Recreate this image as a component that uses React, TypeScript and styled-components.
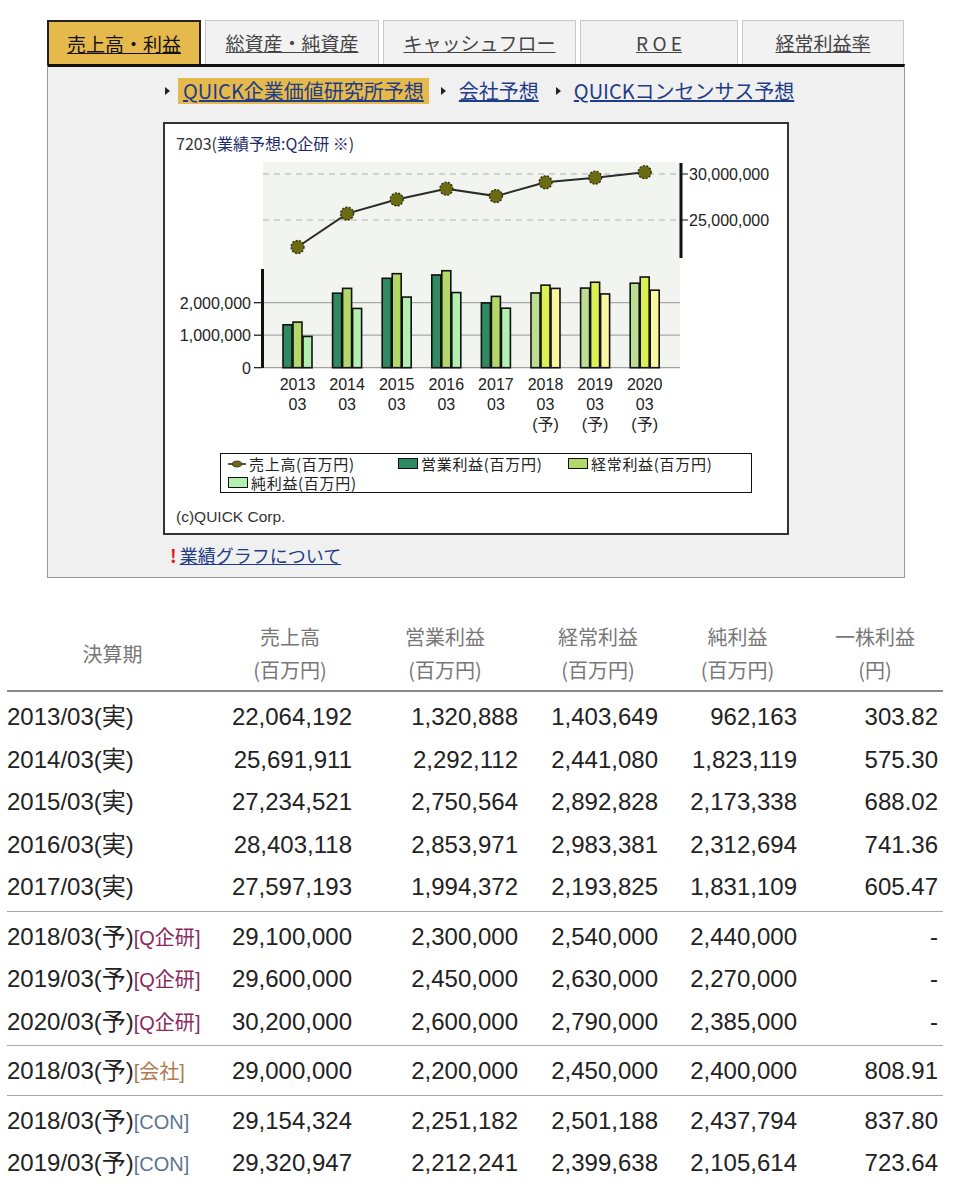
import React from 'react';
import styled, { createGlobalStyle } from 'styled-components';

const GlobalStyle = createGlobalStyle`
  body {
    margin: 0;
    background: #fff;
    color: #222;
    font-family: "Liberation Sans", "Noto Sans CJK JP", sans-serif;
  }
`;

const tabs = [
    { label: '売上高・利益', w: 154, active: true },
    { label: '総資産・純資産', w: 174 },
    { label: 'キャッシュフロー', w: 193 },
    { label: 'R O E', w: 158 },
    { label: '経常利益率', w: 162 },
];

const navs = [
    { label: 'QUICK企業価値研究所予想', active: true },
    { label: '会社予想' },
    { label: 'QUICKコンセンサス予想' },
];

const years = ['2013', '2014', '2015', '2016', '2017', '2018', '2019', '2020'];
const sales = [22064192, 25691911, 27234521, 28403118, 27597193, 29100000, 29600000, 30200000];
const opProfit = [1320888, 2292112, 2750564, 2853971, 1994372, 2300000, 2450000, 2600000];
const ordProfit = [1403649, 2441080, 2892828, 2983381, 2193825, 2540000, 2630000, 2790000];
const netProfit = [962163, 1823119, 2173338, 2312694, 1831109, 2440000, 2270000, 2385000];

const actualColors = ['#2f8a62', '#b3d768', '#b2f0b2'];
const forecastColors = ['#bcdc92', '#dcf052', '#f8f6a0'];

const groups = [
    [
        { period: '2013/03(実)', vals: ['22,064,192', '1,320,888', '1,403,649', '962,163', '303.82'] },
        { period: '2014/03(実)', vals: ['25,691,911', '2,292,112', '2,441,080', '1,823,119', '575.30'] },
        { period: '2015/03(実)', vals: ['27,234,521', '2,750,564', '2,892,828', '2,173,338', '688.02'] },
        { period: '2016/03(実)', vals: ['28,403,118', '2,853,971', '2,983,381', '2,312,694', '741.36'] },
        { period: '2017/03(実)', vals: ['27,597,193', '1,994,372', '2,193,825', '1,831,109', '605.47'] },
    ],
    [
        { period: '2018/03(予)', tag: 'Q企研', vals: ['29,100,000', '2,300,000', '2,540,000', '2,440,000', '-'] },
        { period: '2019/03(予)', tag: 'Q企研', vals: ['29,600,000', '2,450,000', '2,630,000', '2,270,000', '-'] },
        { period: '2020/03(予)', tag: 'Q企研', vals: ['30,200,000', '2,600,000', '2,790,000', '2,385,000', '-'] },
    ],
    [
        { period: '2018/03(予)', tag: '会社', vals: ['29,000,000', '2,200,000', '2,450,000', '2,400,000', '808.91'] },
    ],
    [
        { period: '2018/03(予)', tag: 'CON', vals: ['29,154,324', '2,251,182', '2,501,188', '2,437,794', '837.80'] },
        { period: '2019/03(予)', tag: 'CON', vals: ['29,320,947', '2,212,241', '2,399,638', '2,105,614', '723.64'] },
    ],
];

const tagColors: Record<string, string> = {
    'Q企研': '#8b2a5c',
    '会社': '#b07a50',
    'CON': '#5c7590',
};

const Page = styled.div`
    width: 960px;
    padding: 20px 0 30px;
`;

const TabBar = styled.div`
    display: flex;
    gap: 4px;
    margin-left: 47px;
    width: 858px;
`;

const Tab = styled.div<{ $w: number; $active?: boolean }>`
    width: ${p => p.$w}px;
    height: 44px;
    box-sizing: border-box;
    display: flex;
    align-items: center;
    justify-content: center;
    background: ${p => (p.$active ? '#e6b94c' : '#f2f2f2')};
    border: ${p => (p.$active ? '2px solid #222' : '1px solid #c8c8c8')};
    border-bottom: none;
    font-family: "Noto Sans CJK JP", sans-serif;
    font-size: 19px;
    color: ${p => (p.$active ? '#111' : '#444')};
    text-decoration: underline;
`;

const Panel = styled.div`
    margin-left: 47px;
    width: 858px;
    height: 514px;
    box-sizing: border-box;
    border: 1px solid #9a9a9a;
    border-top: 3px solid #111;
    background: #f0f0f0;
`;

const SubNav = styled.div`
    display: flex;
    gap: 12px;
    padding-left: 117px;
    margin-top: 11px;
`;

const NavItem = styled.div`
    display: flex;
    align-items: center;
    &::before {
        content: '';
        border-left: 5px solid #222;
        border-top: 4px solid transparent;
        border-bottom: 4px solid transparent;
        margin-right: 8px;
    }
`;

const NavLink = styled.span<{ $active?: boolean }>`
    height: 26px;
    line-height: 26px;
    padding: 0 5px;
    background: ${p => (p.$active ? '#e6b94c' : 'transparent')};
    font-family: "Noto Sans CJK JP", sans-serif;
    font-size: 20px;
    color: #1f3c88;
    text-decoration: underline;
`;

const ChartBox = styled.div`
    margin: 18px 0 0 115px;
    width: 626px;
    height: 413px;
    box-sizing: border-box;
    border: 2px solid #333;
    background: #fff;
`;

const ChartTitle = styled.div`
    height: 31px;
    box-sizing: border-box;
    padding: 10px 0 0 11px;
    line-height: 18px;
    font-family: "Noto Sans CJK JP", sans-serif;
    font-size: 16px;
    color: #333;
    span {
        color: #1c2a6a;
    }
`;

const Plot = styled.svg`
    display: block;
    width: 622px;
    height: 290px;
`;

const Legend = styled.div`
    margin: 8px 0 0 55px;
    width: 532px;
    height: 40px;
    box-sizing: border-box;
    border: 1px solid #111;
    padding: 0 0 0 7px;
    display: flex;
    flex-wrap: wrap;
    align-content: flex-start;
`;

const LegendItem = styled.div<{ $w: number }>`
    width: ${p => p.$w}px;
    height: 19px;
    line-height: 19px;
    display: flex;
    align-items: center;
    gap: 3px;
    font-family: "Noto Sans CJK JP", sans-serif;
    font-size: 15px;
    letter-spacing: 0.7px;
    color: #222;
`;

const Swatch = styled.span<{ $c: string }>`
    width: 18px;
    height: 9px;
    border: 1px solid #111;
    background: ${p => p.$c};
    flex: none;
`;

const Copyright = styled.div`
    margin: 15px 0 0 11px;
    line-height: 18px;
    font-size: 15.5px;
    color: #333;
`;

const InfoRow = styled.div`
    margin: 9px 0 0 122px;
    line-height: 22px;
    font-family: "Noto Sans CJK JP", sans-serif;
    font-size: 18px;
    b {
        color: #d42020;
        margin-right: 3px;
    }
    a {
        color: #1f3c88;
        text-decoration: underline;
    }
`;

const Table = styled.div`
    margin: 42px 0 0 7px;
    width: 936px;
`;

const cols = '211px 144px 166px 140px 139px 136px';

const HeadRow = styled.div`
    display: grid;
    grid-template-columns: ${cols};
    padding-bottom: 4px;
    border-bottom: 2px solid #8a8a8a;
`;

const HeadCell = styled.div`
    display: flex;
    flex-direction: column;
    justify-content: center;
    align-items: center;
    line-height: 33px;
    font-family: "Noto Sans CJK JP", sans-serif;
    font-size: 20px;
    color: #777;
`;

const Group = styled.div<{ $last?: boolean }>`
    padding: 4px 0 2px;
    border-bottom: ${p => (p.$last ? 'none' : '1px solid #a8a8a8')};
`;

const Row = styled.div`
    display: grid;
    grid-template-columns: ${cols};
    height: 42.5px;
    align-items: center;
    font-size: 24px;
    color: #222;
    & > span {
        line-height: 28px;
        height: 28px;
        text-align: right;
        padding-right: 10px;
    }
    & > span:first-child {
        text-align: left;
        padding-right: 0;
        white-space: nowrap;
    }
    & > span:last-child {
        padding-right: 5px;
    }
`;

const Tag = styled.em<{ $c: string }>`
    font-style: normal;
    font-size: 20px;
    color: ${p => p.$c};
`;

const cx = (i: number) => 297.5 + 49.6 * i;
const barY = (v: number) => 367.7 - (v / 1e6) * 32.5;
const lineY = (v: number) => 174 - (v / 1e6 - 30) * 9.2;

function Chart() {
    const series = [opProfit, ordProfit, netProfit];
    const points = sales.map((v, i) => `${cx(i)},${lineY(v)}`).join(' ');
    return (
        <Plot viewBox="0 0 622 290">
            <g transform="translate(-165 -155)" fontFamily='"Liberation Sans", "Noto Sans CJK JP", sans-serif' fontSize="16" fill="#222">
                <rect x={263} y={162} width={417} height={206} fill="#f1f4ef" />
                {[174, 220].map(y => (
                    <line key={y} x1={263} x2={680} y1={y} y2={y} stroke="#b0b0b0" strokeWidth={1} strokeDasharray="6 5" />
                ))}
                <line x1={681} x2={681} y1={163} y2={258} stroke="#111" strokeWidth={3} />
                {[['30,000,000', 174], ['25,000,000', 220]].map(([t, y]) => (
                    <g key={t}>
                        <line x1={681} x2={688} y1={y} y2={y} stroke="#111" strokeWidth={1} />
                        <text x={689} y={Number(y) + 6}>{t}</text>
                    </g>
                ))}
                {[302.7, 335.2].map(y => (
                    <line key={y} x1={263} x2={680} y1={y} y2={y} stroke="#a8a8a8" strokeWidth={1.3} />
                ))}
                <line x1={263} x2={680} y1={367.7} y2={367.7} stroke="#a0a0a0" strokeWidth={1.3} />
                <line x1={262.5} x2={262.5} y1={269} y2={368} stroke="#111" strokeWidth={3} />
                {[['2,000,000', 302.7], ['1,000,000', 335.2], ['0', 367.7]].map(([t, y]) => (
                    <g key={t}>
                        <line x1={254} x2={262} y1={y} y2={y} stroke="#111" strokeWidth={1.2} />
                        <text x={251} y={Number(y) + 6} textAnchor="end">{t}</text>
                    </g>
                ))}
                {years.map((yr, i) => (
                    <g key={yr}>
                        {series.map((s, k) => {
                            const top = barY(s[i]);
                            const colors = i >= 5 ? forecastColors : actualColors;
                            return (
                                <rect
                                    key={k}
                                    x={cx(i) - 14.5 + k * 10}
                                    y={top}
                                    width={9}
                                    height={367.7 - top}
                                    fill={colors[k]}
                                    stroke="#111"
                                    strokeWidth={1.6}
                                />
                            );
                        })}
                        <text x={cx(i)} y={390} textAnchor="middle">{yr}</text>
                        <text x={cx(i)} y={410} textAnchor="middle">03</text>
                        {i >= 5 && <text x={cx(i)} y={430} textAnchor="middle">(予)</text>}
                    </g>
                ))}
                <polyline points={points} fill="none" stroke="#2a2a2a" strokeWidth={2} />
                {sales.map((v, i) => (
                    <circle key={i} cx={cx(i)} cy={lineY(v)} r={6.5} fill="#6b6b14" stroke="#2a2a10" strokeWidth={1.3} strokeDasharray="2 1.5" />
                ))}
            </g>
        </Plot>
    );
}

function App() {
    return (
        <Page>
            <GlobalStyle />
            <TabBar>
                {tabs.map(t => (
                    <Tab key={t.label} $w={t.w} $active={t.active}>{t.label}</Tab>
                ))}
            </TabBar>
            <Panel>
                <SubNav>
                    {navs.map(n => (
                        <NavItem key={n.label}>
                            <NavLink $active={n.active}>{n.label}</NavLink>
                        </NavItem>
                    ))}
                </SubNav>
                <ChartBox>
                    <ChartTitle>7203(<span>業績予想:Q企研 ※</span>)</ChartTitle>
                    <Chart />
                    <Legend>
                        <LegendItem $w={170}>
                            <svg width="18" height="10" viewBox="0 0 18 10">
                                <line x1="0" x2="18" y1="5" y2="5" stroke="#222" strokeWidth="1.5" />
                                <ellipse cx="9" cy="5" rx="5" ry="3" fill="#6b6b14" stroke="#222" strokeWidth="0.8" />
                            </svg>
                            売上高(百万円)
                        </LegendItem>
                        <LegendItem $w={170}>
                            <Swatch $c={actualColors[0]} />営業利益(百万円)
                        </LegendItem>
                        <LegendItem $w={180}>
                            <Swatch $c={actualColors[1]} />経常利益(百万円)
                        </LegendItem>
                        <LegendItem $w={170}>
                            <Swatch $c={actualColors[2]} />純利益(百万円)
                        </LegendItem>
                    </Legend>
                    <Copyright>(c)QUICK Corp.</Copyright>
                </ChartBox>
                <InfoRow>
                    <b>!</b>
                    <a>業績グラフについて</a>
                </InfoRow>
            </Panel>
            <Table>
                <HeadRow>
                    <HeadCell>決算期</HeadCell>
                    <HeadCell><span>売上高</span><span>(百万円)</span></HeadCell>
                    <HeadCell><span>営業利益</span><span>(百万円)</span></HeadCell>
                    <HeadCell><span>経常利益</span><span>(百万円)</span></HeadCell>
                    <HeadCell><span>純利益</span><span>(百万円)</span></HeadCell>
                    <HeadCell><span>一株利益</span><span>(円)</span></HeadCell>
                </HeadRow>
                {groups.map((g, gi) => (
                    <Group key={gi} $last={gi === groups.length - 1}>
                        {g.map((r, ri) => (
                            <Row key={ri}>
                                <span>
                                    {r.period}
                                    {r.tag && <Tag $c={tagColors[r.tag]}>[{r.tag}]</Tag>}
                                </span>
                                {r.vals.map((v, vi) => (
                                    <span key={vi}>{v}</span>
                                ))}
                            </Row>
                        ))}
                    </Group>
                ))}
            </Table>
        </Page>
    );
}

export default App;
